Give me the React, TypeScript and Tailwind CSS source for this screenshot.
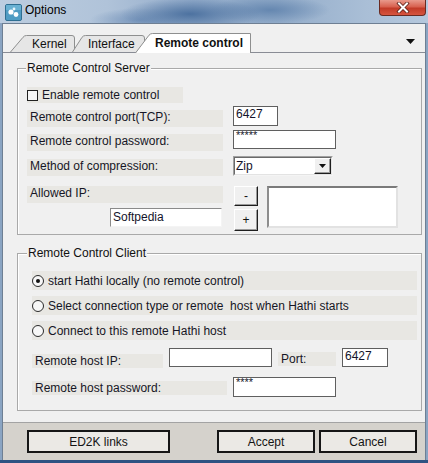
import React from 'react';

// Classic WinForms "Options" dialog, Remote control tab

const labelBg = 'bg-[#e8e7e3]';

function AppIcon() {
  return (
    <svg width="17" height="17" viewBox="0 0 17 17" className="ml-[5px] mt-[4px] shrink-0">
      <rect x="0.5" y="0.5" width="16" height="16" rx="1.5" fill="#4f9cc3" stroke="#2f6f92" />
      <path d="M1 1h15v5H1z" fill="#7cc0de" opacity="0.6" />
      <circle cx="6" cy="8" r="2.6" fill="#fff" />
      <circle cx="11" cy="10.5" r="2.4" fill="#fff" />
      <circle cx="9" cy="5" r="1.4" fill="#e8f6fc" />
    </svg>
  );
}

function CloseButton() {
  return (
    <div className="ml-auto mr-[2px] flex h-[16px] w-[47px] items-center justify-center rounded-b-[4px] border border-t-0 border-[#6a2b22] bg-[linear-gradient(180deg,#e99a8c_0%,#d8614f_45%,#c23b28_55%,#d6553f_100%)]">
      <svg width="14" height="11" viewBox="0 0 14 11">
        <path d="M3 1.5L11 9.5M11 1.5L3 9.5" stroke="#5a2018" strokeWidth="3.6" strokeLinecap="square" />
        <path d="M3 1.5L11 9.5M11 1.5L3 9.5" stroke="#ffffff" strokeWidth="2" strokeLinecap="square" />
      </svg>
    </div>
  );
}

function Tab({ width, height, path, fill, label, pad, selected }: {
  width: number; height: number; path: string; fill: string; label: string; pad: string; selected?: boolean;
}) {
  return (
    <div className={selected ? 'relative z-10 -mb-px -ml-[10px] grid' : 'grid'}>
      <svg width={width} height={height} viewBox={`0 0 ${width} ${height}`} className="col-start-1 row-start-1">
        <path d={path} fill={fill} stroke="#8e8f8f" strokeWidth="1" />
      </svg>
      <span className={`col-start-1 row-start-1 self-center text-[12px] leading-[14px] text-[#111] ${pad} ${selected ? 'font-bold' : ''}`}>
        {label}
      </span>
    </div>
  );
}

function Radio({ checked, label, first }: { checked?: boolean; label: string; first?: boolean }) {
  return (
    <div className={`ml-[14px] flex h-[19px] w-[385px] items-center ${labelBg} ${first ? 'mt-[11px]' : 'mt-[6px]'}`}>
      <span className="flex h-[12px] w-[12px] shrink-0 items-center justify-center rounded-full border border-[#2a2a2a] bg-[#f7f7f7]">
        {checked && <span className="h-[4px] w-[4px] rounded-full bg-[#111]" />}
      </span>
      <span className="ml-[4px] whitespace-pre text-[12px] leading-[14px] text-[#161625]">{label}</span>
    </div>
  );
}

function TextBox({ value, className, stars }: { value?: string; className: string; stars?: boolean }) {
  return (
    <div className={`shrink-0 border border-[#5f5f5f] bg-white pl-[2px] text-[#14142a] ${stars ? 'text-[11px] leading-[9px]' : 'text-[12px] leading-[14px]'} ${className}`}>
      {value}
    </div>
  );
}

function Button3D({ children, className }: { children: React.ReactNode; className: string }) {
  return (
    <div className={`flex items-center justify-center border border-l-white border-t-white border-r-[#1e1e1e] border-b-[#1e1e1e] bg-[#f0f0f0] shadow-[inset_-1px_-1px_0_#9a9a9a] text-[12px] leading-[12px] text-[#111] ${className}`}>
      {children}
    </div>
  );
}

function FlatButton({ children, className }: { children: React.ReactNode; className: string }) {
  return (
    <div className={`flex h-[23px] items-center justify-center border-2 border-[#161616] bg-[#ebe9e5] text-[12px] text-[#141414] ${className}`}>
      {children}
    </div>
  );
}

export default function App() {
  return (
    <div className="flex h-[463px] w-[428px] flex-col overflow-hidden bg-[#8aa4c2] font-['Liberation_Sans',Arial,sans-serif]">
      {/* title bar */}
      <div className="flex h-[23px] items-start bg-[radial-gradient(ellipse_70px_16px_at_190px_14px,#4d72a0,transparent),radial-gradient(ellipse_60px_14px_at_270px_10px,#6587b0,transparent),radial-gradient(ellipse_50px_12px_at_140px_20px,#7896bc,transparent),linear-gradient(90deg,#bccde0_0%,#b0c3d9_25%,#92abca_45%,#94adca_65%,#a9bed6_85%,#b5c8dd_100%)]">
        <AppIcon />
        <span className="ml-[3px] mt-[3px] text-[12px] leading-[15px] text-black">Options</span>
        <CloseButton />
      </div>

      {/* client area */}
      <div className="ml-[2px] flex h-[437px] w-[424px] flex-col border-x border-t border-[#6e7f93] bg-[#d5d2cc]">
        {/* tab strip */}
        <div className="flex h-[29px] items-end border-b border-[#898c95] bg-[#f0f0f0] pl-[7px]">
          <Tab
            width={65}
            height={17}
            path="M0.5 17 L13 2.3 Q14.3 0.5 16.5 0.5 L62 0.5 Q64.5 0.5 64.5 3 L64.5 17"
            fill="#e6e6e6"
            label="Kernel"
            pad="pl-[22px]"
          />
          <div className="-ml-[3px]">
            <Tab
              width={73}
              height={17}
              path="M0.5 17 L10 2.3 Q11.3 0.5 13.5 0.5 L70 0.5 Q72.5 0.5 72.5 3 L72.5 17"
              fill="#e6e6e6"
              label="Interface"
              pad="pl-[16px]"
            />
          </div>
          <Tab
            width={116}
            height={20}
            path="M0.5 20 L14 2.2 Q15.4 0.5 17.5 0.5 L115.5 0.5 L115.5 20"
            fill="#ffffff"
            label="Remote control"
            pad="pl-[20px]"
            selected
          />
          <svg width="9" height="5" viewBox="0 0 9 5" className="mb-[8px] ml-auto mr-[10px]">
            <path d="M0 0h9L4.5 5z" fill="#111" />
          </svg>
        </div>

        {/* tab page */}
        <div className="flex h-[370px] flex-col border-b border-[#a3a3a3] bg-[#f0f0f0] pl-[14px] pt-[15px]">
          {/* Remote Control Server */}
          <div className="flex h-[167px] w-[405px] flex-col border border-[#a9a9a9] pl-[9px] shadow-[inset_1px_1px_0_#ffffff]">
            <span className="-ml-[1px] -mt-[8px] h-[14px] self-start bg-[#f0f0f0] px-[1px] text-[12px] leading-[14px] text-[#111]">
              Remote Control Server
            </span>

            <div className={`mt-[12px] flex h-[16px] w-[156px] items-center ${labelBg}`}>
              <span className="h-[11px] w-[11px] border border-[#222] bg-[#f7f7f7]" />
              <span className="ml-[4px] text-[12px] leading-[14px] text-[#161625]">Enable remote control</span>
            </div>

            <div className="mt-[3px] flex items-start">
              <div className={`mt-[4px] h-[17px] w-[196px] pl-[3px] text-[12px] leading-[15px] text-[#161625] ${labelBg}`}>
                Remote control port(TCP):
              </div>
              <TextBox value="6427" className="ml-[10px] h-[20px] w-[45px]" />
            </div>

            <div className="mt-[3px] flex items-start">
              <div className={`mt-[4px] h-[17px] w-[196px] pl-[3px] text-[12px] leading-[15px] text-[#161625] ${labelBg}`}>
                Remote control password:
              </div>
              <TextBox value="*****" stars className="ml-[10px] h-[19px] w-[103px]" />
            </div>

            <div className="mt-[5px] flex items-start">
              <div className={`mt-[3px] h-[17px] w-[196px] pl-[3px] text-[12px] leading-[15px] text-[#161625] ${labelBg}`}>
                Method of compression:
              </div>
              <div className="ml-[10px] flex h-[20px] w-[100px] border border-l-[#a0a0a0] border-t-[#a0a0a0] border-r-[#f4f4f4] border-b-[#f4f4f4]">
                <div className="flex flex-1 border border-l-[#696969] border-t-[#696969] border-r-[#e3e3e3] border-b-[#e3e3e3] bg-white">
                  <span className="flex-1 pl-[1px] text-[12px] leading-[16px] text-[#14142a]">Zip</span>
                  <Button3D className="h-[16px] w-[17px]">
                    <svg width="7" height="4" viewBox="0 0 7 4">
                      <path d="M0 0h7L3.5 4z" fill="#111" />
                    </svg>
                  </Button3D>
                </div>
              </div>
            </div>

            <div className="mt-[10px] flex items-start">
              <div className="flex w-[196px] flex-col">
                <div className={`h-[17px] pl-[3px] text-[12px] leading-[15px] text-[#161625] ${labelBg}`}>Allowed IP:</div>
                <div className="ml-[83px] mt-[5px] h-[19px] w-[112px] border border-l-[#8a8a8a] border-t-[#8a8a8a] border-r-[#f4f4f4] border-b-[#f4f4f4] bg-white pl-[2px] text-[12px] leading-[16px] text-[#14142a]">
                  Softpedia
                </div>
              </div>
              <div className="ml-[11px] flex flex-col">
                <Button3D className="h-[20px] w-[24px]">-</Button3D>
                <Button3D className="mt-[3px] h-[22px] w-[24px]">+</Button3D>
              </div>
              <div className="ml-[9px] h-[42px] w-[131px] border-2 border-l-[#8d8d8d] border-t-[#7a7a7a] border-r-[#e2e2e2] border-b-[#e2e2e2] bg-white" />
            </div>
          </div>

          {/* Remote Control Client */}
          <div className="mt-[18px] flex h-[158px] w-[405px] flex-col border border-[#a9a9a9] shadow-[inset_1px_1px_0_#ffffff]">
            <span className="-mt-[8px] ml-[9px] h-[14px] self-start bg-[#f0f0f0] px-[1px] text-[12px] leading-[14px] text-[#111]">
              Remote Control Client
            </span>

            <Radio first checked label="start Hathi locally (no remote control)" />
            <Radio label="Select connection type or remote  host when Hathi starts" />
            <Radio label="Connect to this remote Hathi host" />

            <div className="ml-[14px] mt-[8px] flex items-start">
              <div className={`mt-[6px] h-[14px] w-[131px] pl-[3px] text-[12px] leading-[14px] text-[#161625] ${labelBg}`}>
                Remote host IP:
              </div>
              <TextBox className="ml-[6px] h-[19px] w-[103px]" />
              <div className={`ml-[6px] mt-[4px] h-[14px] w-[58px] pl-[3px] text-[12px] leading-[14px] text-[#161625] ${labelBg}`}>
                Port:
              </div>
              <TextBox value="6427" className="ml-[6px] h-[19px] w-[46px]" />
            </div>

            <div className="ml-[14px] mt-[9px] flex items-start">
              <div className={`mt-[4px] h-[14px] w-[195px] pl-[3px] text-[12px] leading-[14px] text-[#161625] ${labelBg}`}>
                Remote host password:
              </div>
              <TextBox value="****" stars className="ml-[6px] h-[20px] w-[103px]" />
            </div>
          </div>
        </div>

        {/* dialog buttons */}
        <div className="flex h-[37px] items-start pt-[7px]">
          <FlatButton className="ml-[24px] w-[143px]">ED2K links</FlatButton>
          <FlatButton className="ml-[47px] w-[98px]">Accept</FlatButton>
          <FlatButton className="ml-[4px] w-[98px]">Cancel</FlatButton>
        </div>
      </div>

      <div className="h-[3px] bg-[#2f5282]" />
    </div>
  );
}
